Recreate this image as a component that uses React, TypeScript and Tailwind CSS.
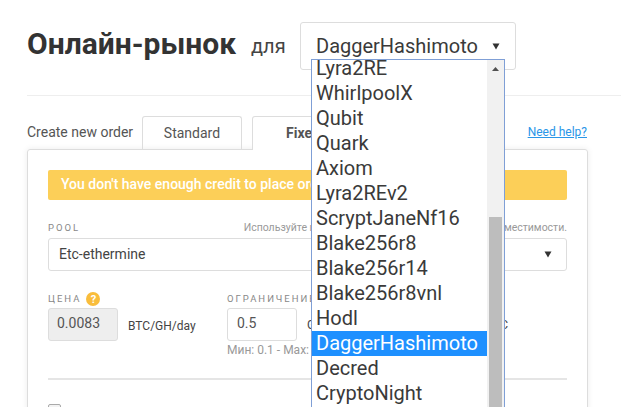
import React from 'react';

const algos = [
  'Lyra2RE',
  'WhirlpoolX',
  'Qubit',
  'Quark',
  'Axiom',
  'Lyra2REv2',
  'ScryptJaneNf16',
  'Blake256r8',
  'Blake256r14',
  'Blake256r8vnl',
  'Hodl',
  'DaggerHashimoto',
  'Decred',
  'CryptoNight',
];

function Arrow({ className }: { className: string }) {
  return (
    <svg className={className} width="8" height="7" viewBox="0 0 8 7">
      <path d="M0.5 0.5h7L4 6.5z" fill="#333" />
    </svg>
  );
}

function Label({ children }: { children: React.ReactNode }) {
  return <span className="text-[9.5px] leading-[12px] tracking-[2px] text-[#888] uppercase whitespace-nowrap">{children}</span>;
}

export default function App() {
  return (
    <div className="relative w-[621px] h-[407px] overflow-hidden bg-white pl-[27px] font-['Roboto',sans-serif] text-[#333]">
      {/* Header */}
      <div className="flex items-start h-[96px] pt-[22px] border-b border-[#eeeeee]">
        <h1 className="w-[224px] mt-[3px] text-[30px] leading-[38px] font-bold text-[#333] whitespace-nowrap">Онлайн-рынок</h1>
        <span className="w-[49px] mt-[12px] text-[20px] leading-[24px] text-[#444]">для</span>
        <div className="flex items-center justify-between w-[216px] h-[48px] pl-[15px] pr-[15px] border border-[#dddddd] rounded-[3px]">
          <span className="text-[20px] leading-[24px] text-[#3a3a3a]">DaggerHashimoto</span>
          <Arrow className="" />
        </div>
      </div>

      {/* Tabs */}
      <div className="flex items-end h-[53px] w-[560px]">
        <span className="w-[115px] h-[33px] text-[14px] leading-[33px] text-[#555] whitespace-nowrap">Create new order</span>
        <div className="w-[100px] h-[33px] border border-b-0 border-[#dddddd] rounded-t-[3px] text-center text-[14px] leading-[33px] text-[#555]">Standard</div>
        <div className="w-[200px] h-[34px] ml-[10px] -mb-px relative z-10 bg-white border border-b-0 border-[#dddddd] rounded-t-[3px] pl-[33px] text-[14px] leading-[33px] font-bold text-[#555]">Fixed</div>
        <a className="ml-auto h-[26px] text-[12px] leading-[18px] text-[#2a96e8] underline whitespace-nowrap">Need help?</a>
      </div>

      {/* Order panel */}
      <div className="w-[561px] h-[300px] px-[20px] pt-[20px] border border-[#dddddd] rounded-t-[3px] shadow-[0_0_6px_rgba(0,0,0,0.08)]">
        <div className="w-[519px] h-[30px] pl-[13px] bg-[#fccf58] rounded-[2px] text-[14px] leading-[29px] font-medium text-white whitespace-nowrap">
          You don't have enough credit to place order.
        </div>

        <div className="flex items-center justify-between w-[519px] mt-[22px] h-[12px]">
          <Label>Pool</Label>
          <span className="text-[10.5px] leading-[12px] text-[#999] whitespace-nowrap">Используйте пул, который годится для всей вашей вместимости.</span>
        </div>
        <div className="flex items-center justify-between w-[519px] h-[33px] mt-[4px] pl-[10px] pr-[14px] border border-[#dddddd] rounded-[3px]">
          <span className="text-[14px] text-[#444]">Etc-ethermine</span>
          <Arrow className="" />
        </div>

        <div className="flex mt-[20px]">
          <div className="w-[179px]">
            <div className="flex items-center gap-[5px] h-[16px]">
              <Label>Цена</Label>
              <span className="flex items-center justify-center w-[14px] h-[14px] rounded-full bg-[#f9bd3c] text-[11px] leading-none font-bold text-white">?</span>
            </div>
            <div className="flex items-center mt-[1px]">
              <div className="w-[70px] h-[33px] pl-[8px] bg-[#eeeeee] border border-[#dddddd] rounded-[3px] text-[14px] leading-[29px] text-[#555]">0.0083</div>
              <span className="ml-[10px] mt-[3px] text-[12px] text-[#444]">BTC/GH/day</span>
            </div>
          </div>
          <div>
            <div className="flex items-center h-[16px]">
              <Label>Ограничение</Label>
            </div>
            <div className="flex items-center mt-[1px]">
              <div className="w-[70px] h-[33px] pl-[9px] border border-[#dddddd] rounded-[3px] text-[14px] leading-[29px] text-[#555]">0.5</div>
              <span className="flex justify-between w-[201px] ml-[10px] text-[12px] text-[#444]">
                <span>GH/s</span>
                <span>0.0042 BTC</span>
              </span>
            </div>
            <div className="text-[12px] leading-[18px] text-[#999] whitespace-nowrap">Мин: 0.1 - Max: 100</div>
          </div>
        </div>

        <div className="w-[519px] h-[2px] mt-[19px] bg-[#e5e5e5]" />
        <div className="w-[13px] h-[13px] mt-[24px] border border-[#aaaaaa] rounded-[2px] bg-[#f3f3f3]" />
      </div>

      {/* Open algorithm list */}
      <div className="absolute left-[311px] top-[59px] z-20 flex w-[194px] h-[360px] overflow-hidden bg-white border border-[#7f9fd6]">
        <div className="w-[175px] -mt-[4px]">
          {algos.map((a) => (
            <div
              key={a}
              className={
                a === 'DaggerHashimoto'
                  ? 'h-[25px] pl-[4px] text-[20px] leading-[25px] bg-[#1e90ff] text-white'
                  : 'h-[25px] pl-[4px] text-[20px] leading-[25px] text-[#3a3a3a]'
              }
            >
              {a}
            </div>
          ))}
        </div>
        <div className="relative w-[17px] bg-[#f1f1f1]">
          <svg className="absolute left-[5px] top-[7px]" width="7" height="4" viewBox="0 0 7 4">
            <path d="M3.5 0L7 4H0z" fill="#505050" />
          </svg>
          <div className="absolute left-[2px] top-[157px] w-[13px] h-[200px] bg-[#bdbdbd]" />
        </div>
      </div>
    </div>
  );
}
